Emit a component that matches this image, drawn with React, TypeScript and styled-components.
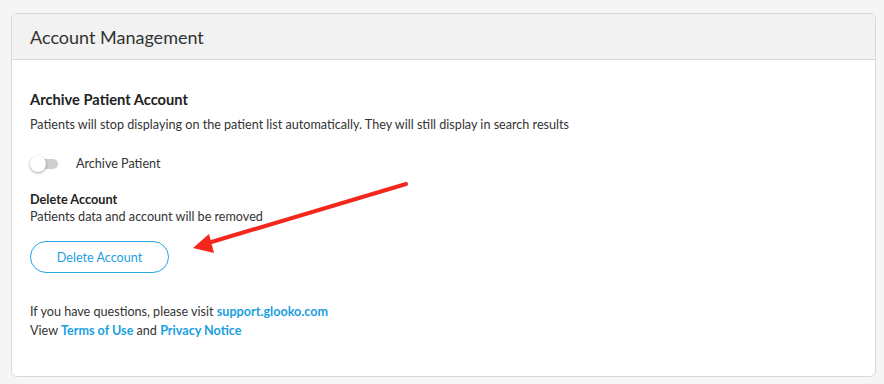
import React from 'react';
import styled, { createGlobalStyle } from 'styled-components';

const GlobalStyle = createGlobalStyle`
  body {
    margin: 0;
    background: #f5f5f5;
    font-family: Lato, "Open Sans", sans-serif;
    color: #333;
  }
`;

const Page = styled.div`
  position: relative;
  padding: 13px 8px 7px 11px;
`;

const Card = styled.section`
  width: 865px;
  height: 364px;
  box-sizing: border-box;
  border: 1px solid #d9d9d9;
  border-radius: 6px;
  background: #fff;
  overflow: hidden;
  display: flex;
  flex-direction: column;
`;

const CardHeader = styled.header`
  height: 46px;
  box-sizing: border-box;
  background: #f2f2f2;
  border-bottom: 1px solid #d9d9d9;
  display: flex;
  align-items: center;
  padding: 0 18px;
`;

const Title = styled.h2`
  margin: 0;
  font-size: 18px;
  font-weight: 400;
  color: #333;
`;

const CardBody = styled.div`
  padding: 30px 18px 0;
  display: flex;
  flex-direction: column;
`;

const SectionTitle = styled.h3`
  margin: 0;
  font-size: 14.7px;
  font-weight: 700;
  color: #222;
  line-height: 18px;
`;

const Text = styled.p<{ $mt?: number }>`
  margin: ${p => p.$mt ?? 0}px 0 0;
  font-size: 12.6px;
  line-height: 18px;
  color: #333;
`;

const SubTitle = styled.h4`
  margin: 19px 0 0;
  font-size: 12.7px;
  font-weight: 700;
  color: #222;
  line-height: 18px;
`;

const ToggleRow = styled.label`
  margin-top: 22px;
  display: flex;
  align-items: center;
  gap: 18px;
  font-size: 12.6px;
  color: #333;
`;

const Track = styled.span`
  position: relative;
  width: 27px;
  height: 10px;
  margin-left: 1px;
  border-radius: 5px;
  background: #cfcfcf;
`;

const Knob = styled.span`
  position: absolute;
  left: -1px;
  top: -3px;
  width: 16px;
  height: 16px;
  border-radius: 50%;
  background: #fff;
  box-shadow: 0 1px 3px rgba(0, 0, 0, 0.35);
`;

const OutlineButton = styled.button`
  margin-top: 15px;
  width: 139px;
  height: 32px;
  border: 1px solid #27a6e5;
  border-radius: 16px;
  background: #fff;
  color: #1e9ee0;
  font-family: inherit;
  font-size: 12.6px;
  cursor: pointer;
`;

const Footer = styled.div`
  margin-top: 30px;
`;

const Link = styled.a`
  color: #1a9fe0;
  font-weight: 700;
  text-decoration: none;
`;

const Arrow = styled.svg`
  position: absolute;
  left: 0;
  top: 0;
  pointer-events: none;
`;

export default function App() {
  return (
    <>
      <GlobalStyle />
      <Page>
        <Card>
          <CardHeader>
            <Title>Account Management</Title>
          </CardHeader>
          <CardBody>
            <SectionTitle>Archive Patient Account</SectionTitle>
            <Text $mt={8}>
              Patients will stop displaying on the patient list automatically. They will still display in search results
            </Text>
            <ToggleRow>
              <Track>
                <Knob />
              </Track>
              Archive Patient
            </ToggleRow>
            <SubTitle>Delete Account</SubTitle>
            <Text>Patients data and account will be removed</Text>
            <OutlineButton>Delete Account</OutlineButton>
            <Footer>
              <Text>
                If you have questions, please visit <Link href="#">support.glooko.com</Link>
              </Text>
              <Text $mt={1}>
                View <Link href="#">Terms of Use</Link> and <Link href="#">Privacy Notice</Link>
              </Text>
            </Footer>
          </CardBody>
        </Card>
        <Arrow width="884" height="384" viewBox="0 0 884 384">
          <line x1="406" y1="184" x2="208" y2="243" stroke="#f4271c" strokeWidth="4" strokeLinecap="round" />
          <polygon points="193,248 209,234 214,253" fill="#f4271c" />
        </Arrow>
      </Page>
    </>
  );
}
